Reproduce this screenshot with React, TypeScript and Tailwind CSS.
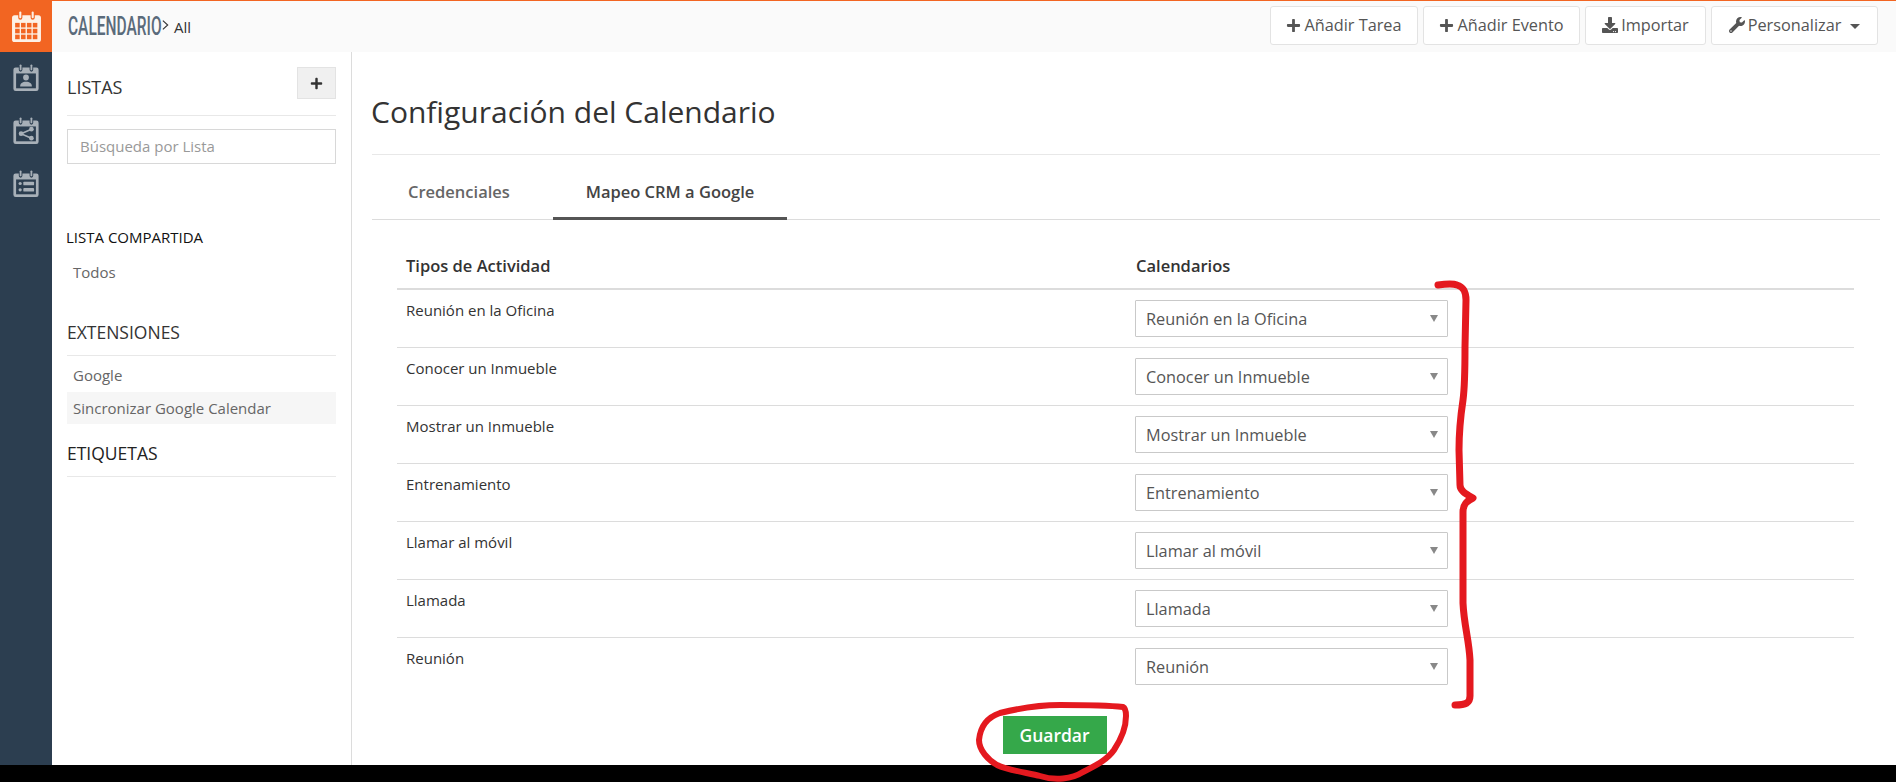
import { FaPlus, FaDownload, FaWrench } from "react-icons/fa";

const activityTypes = [
  "Reunión en la Oficina",
  "Conocer un Inmueble",
  "Mostrar un Inmueble",
  "Entrenamiento",
  "Llamar al móvil",
  "Llamada",
  "Reunión",
];

function CalendarBase({ className, children }: { className: string; children?: React.ReactNode }) {
  return (
    <svg viewBox="0 0 28 30" className={className} fill="currentColor">
      <path d="M2.5 4H6v2.5a2 2 0 0 0 4 0V4h8v2.5a2 2 0 0 0 4 0V4h3.5A2.5 2.5 0 0 1 28 6.5v21a2.5 2.5 0 0 1-2.5 2.5h-23A2.5 2.5 0 0 1 0 27.5v-21A2.5 2.5 0 0 1 2.5 4z" />
      <rect x="7" y="0.5" width="2" height="6.5" rx="1" />
      <rect x="19" y="0.5" width="2" height="6.5" rx="1" />
      {children}
    </svg>
  );
}

function MainCalendarIcon() {
  const cells = [];
  for (let row = 0; row < 3; row++) {
    for (let col = 0; col < 4; col++) {
      cells.push(<rect key={row + "-" + col} x={3 + col * 5.7} y={11.5 + row * 5.7} width="4.4" height="4.4" fill="#f26522" />);
    }
  }
  return <CalendarBase className="w-[29px] h-[31px] text-[#fdf1e6]">{cells}</CalendarBase>;
}

function RailIcon({ kind }: { kind: "person" | "share" | "list" }) {
  return (
    <CalendarBase className="w-[26px] h-[27px] text-[#a8b0b8]">
      <rect x="3" y="10.5" width="22" height="16.5" fill="#2c3e50" />
      {kind === "person" && (
        <g>
          <circle cx="14" cy="15" r="3.2" />
          <path d="M7.5 25c0-3.5 2.5-5.2 6.5-5.2s6.5 1.7 6.5 5.2z" />
        </g>
      )}
      {kind === "share" && (
        <g>
          <circle cx="20" cy="13.5" r="2.6" />
          <circle cx="8.5" cy="18.5" r="2.6" />
          <circle cx="20" cy="23.5" r="2.6" />
          <path d="M20 13.5L8.5 18.5L20 23.5" fill="none" stroke="currentColor" strokeWidth="1.8" />
        </g>
      )}
      {kind === "list" && (
        <g>
          <circle cx="7.5" cy="15" r="1.8" />
          <rect x="11" y="13" width="12" height="4" rx="1" />
          <circle cx="7.5" cy="22" r="1.8" />
          <rect x="11" y="20" width="12" height="4" rx="1" />
        </g>
      )}
    </CalendarBase>
  );
}

function HeaderButton({ icon, label, caret, width }: { icon: React.ReactNode; label: string; caret?: boolean; width: string }) {
  return (
    <button className={"h-[39px] bg-white border border-[#e3e3e3] rounded-[3px] flex items-center justify-center text-[#555] text-[16.3px] " + width}>
      <span className="text-[#555] mr-[3px]">{icon}</span>
      {label}
      {caret && <span className="ml-[9px] mt-[2px] w-0 h-0 border-x-[5px] border-x-transparent border-t-[5px] border-t-[#555]" />}
    </button>
  );
}

function SelectBox({ value }: { value: string }) {
  return (
    <div className="w-[313px] h-[37px] bg-white border border-[#c9c9c9] rounded-[1px] flex items-center justify-between pl-[10px] pr-[9px] text-[16.3px] text-[#555]">
      <span className="pt-[2px]">{value}</span>
      <span className="w-0 h-0 border-x-[4px] border-x-transparent border-t-[7px] border-t-[#888]" />
    </div>
  );
}

export default function App() {
  return (
    <div className="w-[1896px] h-[782px] relative overflow-hidden flex flex-col bg-white text-[#333]" style={{ fontFamily: '"Open Sans", sans-serif' }}>
      <div className="h-[765px] flex">
        {/* left rail */}
        <div className="w-[52px] bg-[#2c3e50] flex flex-col items-center">
          <div className="w-[52px] h-[52px] bg-[#f26522] flex items-center justify-center shrink-0">
            <MainCalendarIcon />
          </div>
          <div className="mt-[12px] flex flex-col gap-[26px]">
            <RailIcon kind="person" />
            <RailIcon kind="share" />
            <RailIcon kind="list" />
          </div>
        </div>

        <div className="flex-1 flex flex-col min-w-0">
          {/* top bar */}
          <div className="h-[52px] bg-[#fafafa] border-t border-t-[#f26522] flex items-center justify-between pl-[16px] pr-[18px] shrink-0">
            <div className="flex items-center text-[#2c3e50]">
              <span className="inline-block origin-left scale-x-[0.62] mr-[-60px] text-[25px] font-medium text-[#5a6b7b] uppercase" style={{ fontFamily: "Roboto, sans-serif" }}>Calendario</span>
              <svg viewBox="0 0 8 12" className="w-[7px] h-[12px] ml-[3px] -mt-[4px]" fill="none" stroke="#333" strokeWidth="1.3"><path d="M1 1l5.5 5L1 11" /></svg>
              <span className="text-[15px] text-[#333] ml-[5px] mt-[2px]">All</span>
            </div>
            <div className="flex gap-[5px] -mt-[3px]">
              <HeaderButton icon={<FaPlus className="inline w-[15px] h-[15px] -mt-[2px]" />} label="Añadir Tarea" width="w-[148px]" />
              <HeaderButton icon={<FaPlus className="inline w-[15px] h-[15px] -mt-[2px]" />} label="Añadir Evento" width="w-[157px]" />
              <HeaderButton icon={<FaDownload className="inline w-[16px] h-[16px] -mt-[3px]" />} label="Importar" width="w-[121px]" />
              <HeaderButton icon={<FaWrench className="inline w-[16px] h-[16px] -mt-[2px]" />} label="Personalizar" caret width="w-[167px]" />
            </div>
          </div>

          <div className="flex-1 flex min-h-0">
            {/* sidebar */}
            <div className="w-[300px] border-r border-[#dcdcdc] pl-[15px] pr-[15px] shrink-0">
              <div className="h-[64px] pt-[15px] border-b border-[#e8e8e8] flex justify-between items-start">
                <span className="text-[18px] text-[#333] leading-[24px] mt-[8px]">LISTAS</span>
                <button className="w-[39px] h-[32px] bg-[#f0f0f0] border border-[#e3e3e3] flex items-center justify-center text-[#333]">
                  <FaPlus className="w-[13px] h-[13px]" />
                </button>
              </div>
              <div className="mt-[13px] h-[35px] border border-[#d8d8d8] flex items-center pl-[12px] text-[15px] text-[#999]">Búsqueda por Lista</div>
              <div className="mt-[63px] -ml-[1px] text-[15px] text-[#111] leading-[20px]">LISTA COMPARTIDA</div>
              <div className="mt-[15px] pl-[6px] text-[15px] text-[#666] leading-[20px]">Todos</div>
              <div className="mt-[38px] text-[17.5px] text-[#333] leading-[24px] pb-[11px] border-b border-[#e8e8e8]">EXTENSIONES</div>
              <div className="mt-[3px] pl-[6px] h-[33px] flex items-center text-[15px] text-[#666]">Google</div>
              <div className="pl-[6px] h-[32px] flex items-center text-[15px] text-[#666] bg-[#f6f6f6]">Sincronizar Google Calendar</div>
              <div className="mt-[17px] text-[17.5px] text-[#222] leading-[24px] pb-[11px] border-b border-[#e8e8e8]">ETIQUETAS</div>
            </div>

            {/* main */}
            <div className="flex-1 pl-[20px] pr-[16px] min-w-0">
              <div className="h-[103px] pt-[41px] border-b border-[#e8e8e8]">
                <h1 className="text-[30px] leading-[38px] text-[#333] -ml-[1px]">Configuración del Calendario</h1>
              </div>
              <div className="h-[65px] border-b border-[#dcdcdc] flex text-[16.5px] font-semibold pl-[36px]">
                <div className="pt-[25px] text-[#666] w-[145px]">Credenciales</div>
                <div className="w-[234px] pt-[25px] border-b-[3px] border-[#555] h-[65px] text-center text-[#444]">Mapeo CRM a Google</div>
              </div>
              <div className="ml-[25px] mr-[26px] mt-[31px]">
                <div className="grid grid-cols-[739px_1fr] pl-[9px] border-b-2 border-[#dcdcdc] h-[39px] text-[16.5px] font-semibold text-[#333]">
                  <div className="leading-[22px] pt-[4px]">Tipos de Actividad</div>
                  <div className="leading-[22px] pt-[4px] -ml-[9px]">Calendarios</div>
                </div>
                {activityTypes.map((name, i) => (
                  <div key={name} className={"grid grid-cols-[739px_1fr] h-[58px] pl-[9px] " + (i < activityTypes.length - 1 ? "border-b border-[#dcdcdc]" : "")}>
                    <div className="text-[15px] leading-[20px] pt-[10px] text-[#333]">{name}</div>
                    <div className="pt-[10px] -ml-[10px]"><SelectBox value={name} /></div>
                  </div>
                ))}
              </div>
              <div className="flex justify-center mt-[20px] pr-[143px]">
                <button className="w-[104px] h-[38px] bg-[#35a84a] text-white text-[17.5px] font-semibold">Guardar</button>
              </div>
            </div>
          </div>
        </div>
      </div>
      <div className="h-[17px] bg-black shrink-0" />

      {/* red marker annotations on the screenshot */}
      <svg className="absolute inset-0 pointer-events-none" width="1896" height="782" fill="none" stroke="#e4191f" strokeLinecap="round" strokeLinejoin="round">
        <path strokeWidth="7" d="M1438 285C1445 284 1452 283 1457 285C1464 287 1466 292 1466 300L1465 347C1465 370 1465 385 1463 400C1460 420 1459 435 1459 450L1460 485C1460 491 1466 494 1473 498C1467 501 1463 504 1463 512L1463 603C1464 625 1469 640 1470 660L1470 696C1470 703 1466 705 1455 705" />
        <path strokeWidth="6" d="M1123 707C1105 705 1080 705 1060 705C1045 705 1020 708 1000 713C985 718 980 730 979 740C979 750 988 760 997 765C1010 771 1030 773 1040 776C1055 781 1072 779 1083 772C1095 766 1107 760 1114 750C1122 738 1126 725 1126 716C1126 710 1125 708 1123 707Z" />
      </svg>
    </div>
  );
}
